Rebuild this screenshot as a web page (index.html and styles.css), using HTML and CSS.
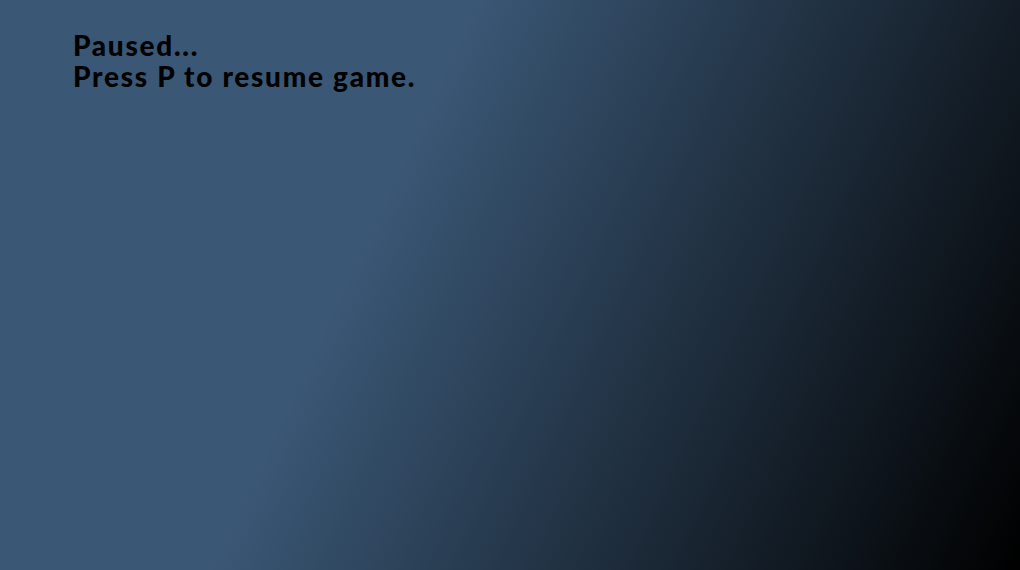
FILE: index.html
```html
<!DOCTYPE html>
<html>
<head>
<meta charset="utf-8">
<link rel="stylesheet" href="styles.css">
</head>
<body>
<div class="screen">
  <div class="pause-msg">
    <div class="line">Paused...</div>
    <div class="line">Press P to resume game.</div>
  </div>
</div>
</body>
</html>
```
FILE: styles.css
```css
html, body {
  margin: 0;
  padding: 0;
  width: 100%;
  height: 100%;
}
.screen {
  width: 1020px;
  height: 570px;
  background: linear-gradient(115deg, #3a5775 0%, #3a5775 37%, #000 100%);
  box-sizing: border-box;
  padding: 30px 0 0 73px;
}
.pause-msg {
  font-family: "Lato", "Liberation Sans", sans-serif;
  font-weight: 900;
  font-size: 28px;
  line-height: 31px;
  letter-spacing: 1.7px;
  color: #000;
}
```
